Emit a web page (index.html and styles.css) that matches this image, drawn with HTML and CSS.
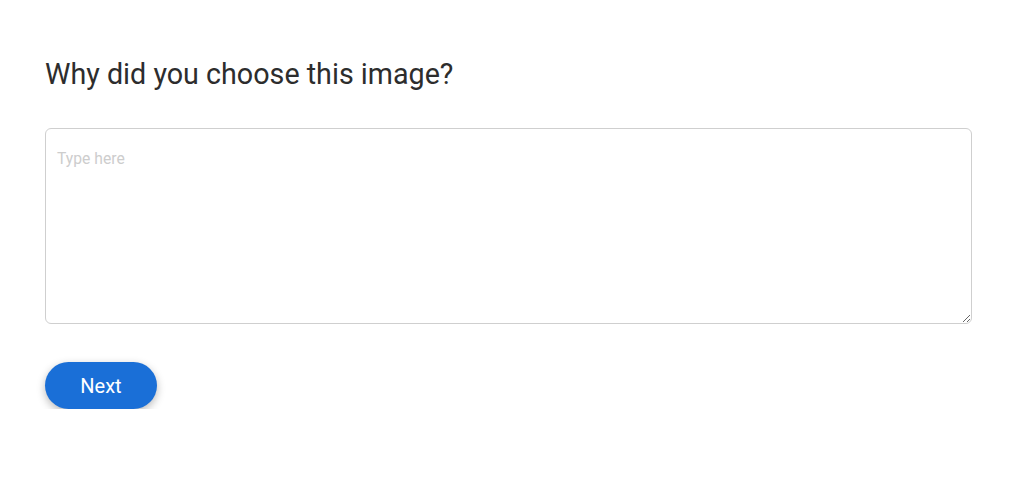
FILE: index.html
```html
<!DOCTYPE html>
<html lang="en">
<head>
<meta charset="utf-8">
<link rel="stylesheet" href="styles.css">
</head>
<body>
<main class="page">
  <h1 class="question">Why did you choose this image?</h1>
  <textarea class="answer" placeholder="Type here"></textarea>
  <div class="actions">
    <button class="next-btn" type="button">Next</button>
  </div>
</main>
</body>
</html>
```
FILE: styles.css
```css
html, body {
  margin: 0;
  padding: 0;
  background: #ffffff;
}
body {
  font-family: Roboto, "Liberation Sans", Arial, sans-serif;
  color: #2b2b2b;
}
.page {
  padding: 55px 52px 0 45px;
  display: flex;
  flex-direction: column;
}
.question {
  margin: 0;
  font-size: 28.7px;
  font-weight: 400;
  line-height: 38px;
  color: #2d2d2d;
}
.answer {
  margin-top: 35px;
  box-sizing: border-box;
  width: 927px;
  height: 196px;
  border: 1px solid #cfcfcf;
  border-radius: 6px;
  padding: 20px 11px;
  font-family: Roboto, "Liberation Sans", Arial, sans-serif;
  font-size: 15.7px;
  color: #333;
  outline: none;
  resize: vertical;
}
.answer::placeholder {
  color: #cdcdcd;
}
.actions {
  margin-top: 38px;
  display: flex;
}
.next-btn {
  width: 112px;
  height: 47px;
  border: none;
  border-radius: 24px;
  background: #1a6fd7;
  color: #ffffff;
  font-family: Roboto, "Liberation Sans", Arial, sans-serif;
  font-size: 20px;
  font-weight: 400;
  box-shadow: 0 3px 8px rgba(0, 0, 0, 0.28);
  cursor: pointer;
}
```
